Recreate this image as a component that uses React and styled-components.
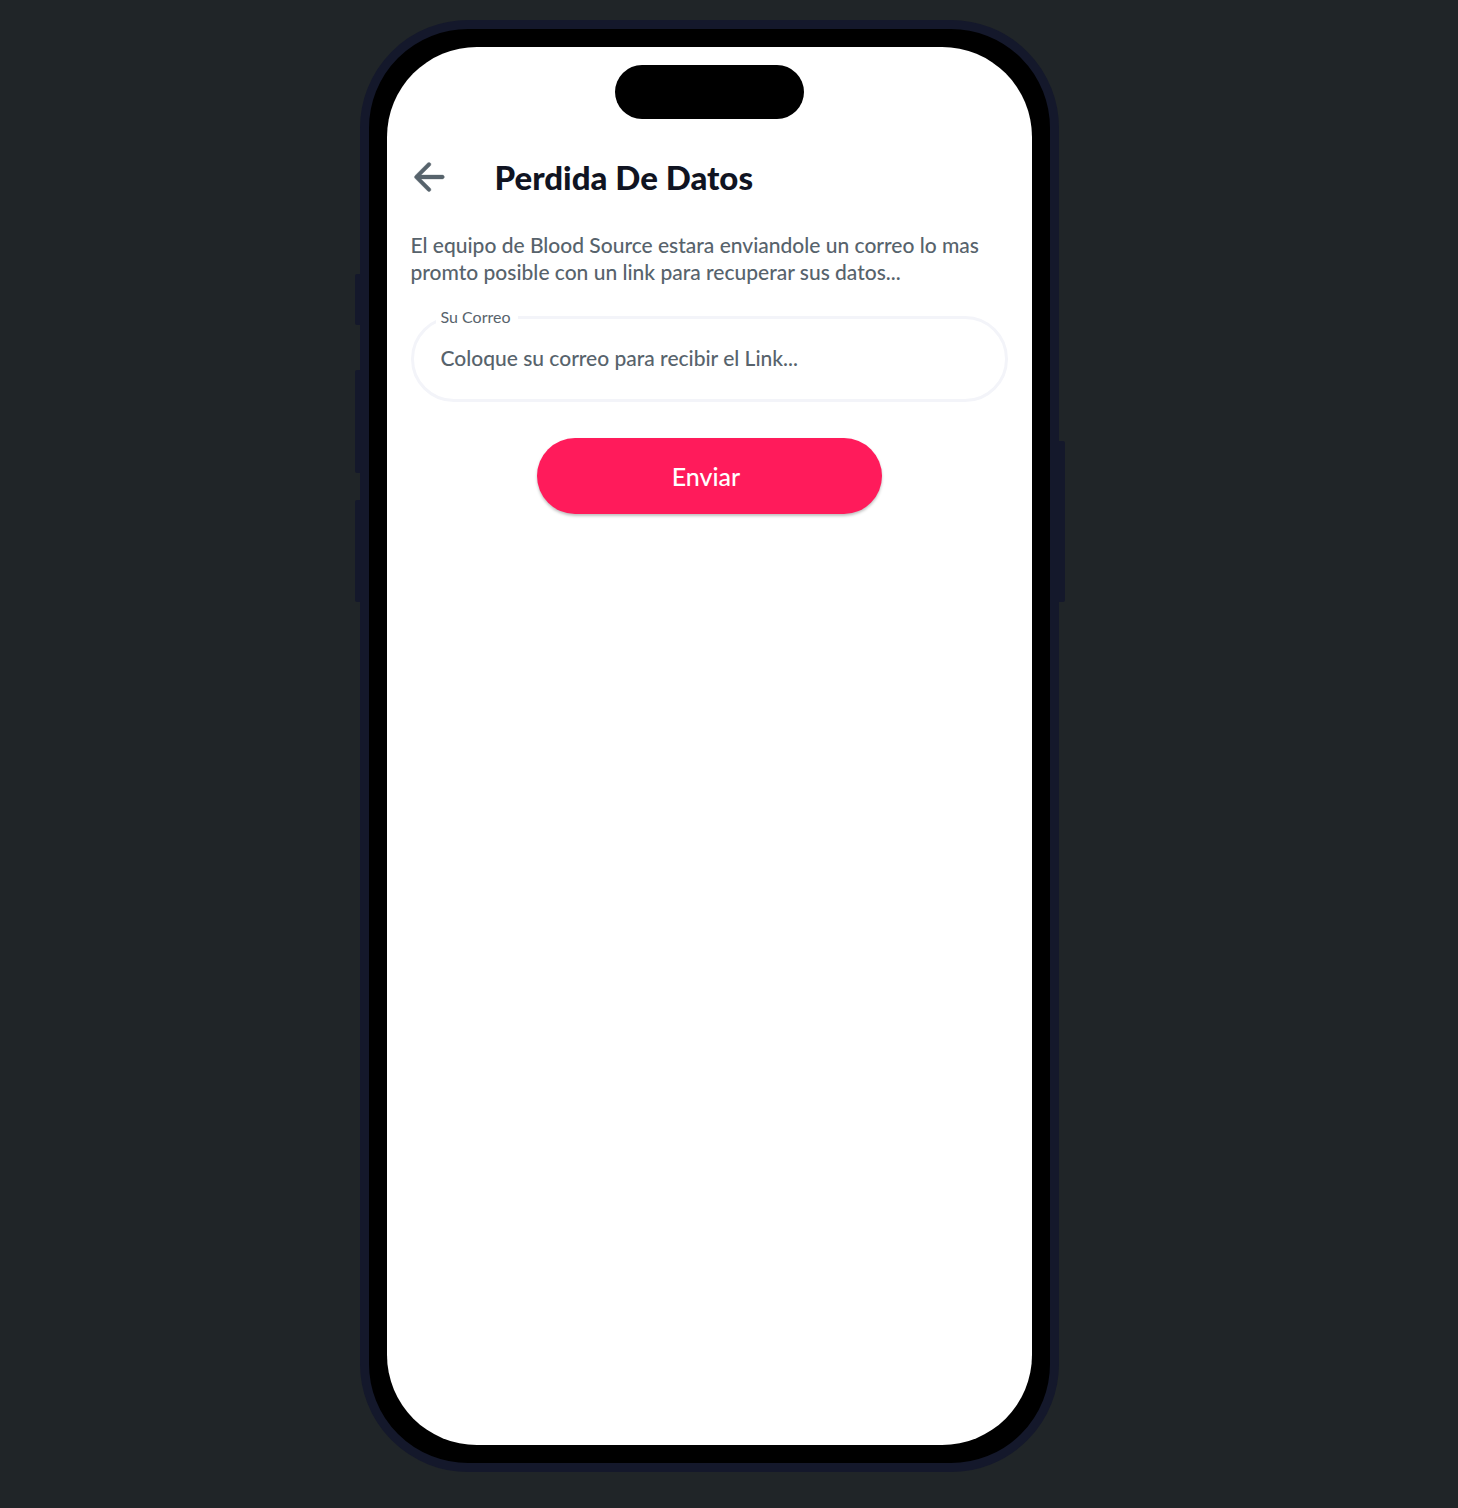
import React from "react";
import styled, { createGlobalStyle } from "styled-components";

const GlobalStyle = createGlobalStyle`
  *, *::before, *::after { box-sizing: border-box; }
  body {
    margin: 0;
    background: #202528;
    font-family: Lato, "Open Sans", sans-serif;
    -webkit-font-smoothing: antialiased;
  }
`;

const Stage = styled.main`
  display: flex;
  justify-content: center;
  min-height: 100vh;
  padding: 20px 48px 36px 8px;
`;

const Phone = styled.div`
  position: relative;
  align-self: flex-start;
  width: 100%;
  max-width: 699px;
  padding: 18px;
  border: 9px solid #14182b;
  border-radius: 108px;
  background: #000;
`;

const SideKey = styled.span`
  position: absolute;
  top: ${(p) => p.$top}px;
  ${(p) => (p.$side === "left" ? "left: -14px;" : "right: -15px;")}
  width: 6px;
  height: ${(p) => p.$length}px;
  background: #14182b;
  border-radius: ${(p) => (p.$side === "left" ? "2px 0 0 2px" : "0 2px 2px 0")};
`;

const Screen = styled.div`
  display: flex;
  flex-direction: column;
  min-height: 1398px;
  padding: 18px 24px 24px;
  border-radius: 90px;
  background: #fff;
`;

const Island = styled.div`
  align-self: center;
  width: 189px;
  height: 54px;
  border-radius: 27px;
  background: #000;
`;

const Header = styled.header`
  display: flex;
  align-items: center;
  gap: 36px;
  margin-top: 30px;
`;

const BackButton = styled.button`
  display: grid;
  place-items: center;
  width: 48px;
  height: 56px;
  margin-left: -6px;
  padding: 0;
  border: 0;
  background: none;
  color: #57636c;
  cursor: pointer;
  svg { width: 46px; height: 46px; fill: currentColor; stroke: currentColor; stroke-width: 0.2; }
`;

const Title = styled.h1`
  margin: 0;
  padding-left: 6px;
  color: #101422;
  font-size: 33px;
  font-weight: 900;
  line-height: 40px;
`;

const Intro = styled.p`
  margin: 26px 0 0;
  color: #57636c;
  font-size: 21px;
  font-weight: 500;
  line-height: 27px;
`;

const Form = styled.form`
  display: flex;
  flex-direction: column;
  align-items: center;
  gap: 36px;
  margin-top: 31px;
`;

const Field = styled.div`
  position: relative;
  width: 100%;
`;

const FieldLabel = styled.label`
  position: absolute;
  top: -9px;
  left: 25px;
  padding: 0 8px 0 5px;
  background: #fff;
  color: #57636c;
  font-size: 16px;
  line-height: 20px;
`;

const EmailInput = styled.input`
  display: block;
  width: 100%;
  height: 86px;
  padding: 0 27px 4px;
  border: 3px solid #f3f4f9;
  border-radius: 43px;
  background: #fff;
  color: #57636c;
  font: 500 21px/27px Lato, "Open Sans", sans-serif;
  &::placeholder { color: #57636c; opacity: 1; }
`;

const SubmitButton = styled.button`
  width: 345px;
  max-width: 100%;
  height: 76px;
  padding: 0 6px 0 0;
  border: 0;
  border-radius: 38px;
  background: #ff1b5b;
  box-shadow: 0 2px 3px rgba(0, 0, 0, 0.25);
  color: #fff;
  font: 500 25px/30px Lato, "Open Sans", sans-serif;
  cursor: pointer;
`;

export default function App() {
  return (
    <>
      <GlobalStyle />
      <Stage>
        <Phone>
          <SideKey $side="left" $top={245} $length={51} />
          <SideKey $side="left" $top={341} $length={103} />
          <SideKey $side="left" $top={471} $length={102} />
          <SideKey $side="right" $top={412} $length={161} />
          <Screen>
            <Island />
            <Header>
              <BackButton type="button" aria-label="Volver">
                <svg viewBox="0 0 24 24" aria-hidden="true">
                  <path d="M19 11H7.83l4.88-4.88c.39-.39.39-1.03 0-1.42-.39-.39-1.02-.39-1.41 0l-6.59 6.59c-.39.39-.39 1.02 0 1.41l6.59 6.59c.39.39 1.02.39 1.41 0 .39-.39.39-1.02 0-1.41L7.83 13H19c.55 0 1-.45 1-1s-.45-1-1-1z" />
                </svg>
              </BackButton>
              <Title>Perdida De Datos</Title>
            </Header>
            <Intro>
              El equipo de Blood Source estara enviandole un correo lo mas
              promto posible con un link para recuperar sus datos...
            </Intro>
            <Form onSubmit={(event) => event.preventDefault()}>
              <Field>
                <EmailInput
                  id="correo"
                  type="email"
                  placeholder="Coloque su correo para recibir el Link..."
                />
                <FieldLabel htmlFor="correo">Su Correo</FieldLabel>
              </Field>
              <SubmitButton type="submit">Enviar</SubmitButton>
            </Form>
          </Screen>
        </Phone>
      </Stage>
    </>
  );
}
